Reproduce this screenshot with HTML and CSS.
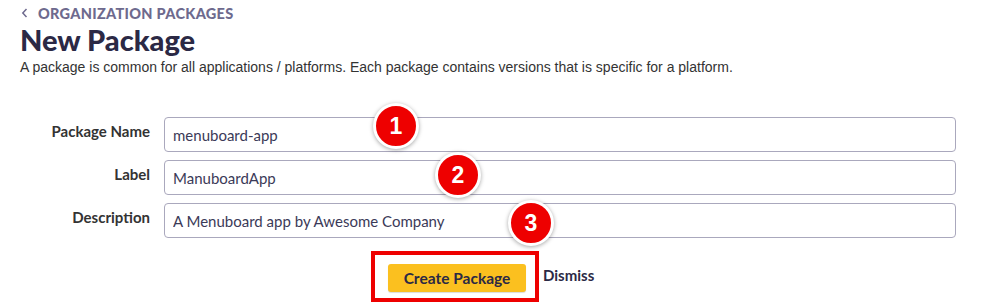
FILE: index.html
```html
<!DOCTYPE html>
<html lang="en">
<head>
<meta charset="utf-8">
<title>New Package</title>
<link rel="stylesheet" href="styles.css">
</head>
<body>

<div id="page">
	<a class="back-link" href="#">
		<svg class="chevron" width="8" height="10" viewBox="0 0 8 10"><path d="M5.5 1 L1.8 5 L5.5 9" fill="none" stroke="#6e6a8e" stroke-width="1.5"/></svg>
		ORGANIZATION PACKAGES
	</a>
	<h1 class="title">New Package</h1>
	<p class="intro">A package is common for all applications / platforms. Each package contains versions that is specific for a platform.</p>

	<form class="package-form">
		<div class="form-row">
			<label class="field-label">Package Name</label>
			<div class="field">
				<input type="text" value="menuboard-app">
				<span class="badge badge-1">1</span>
			</div>
		</div>
		<div class="form-row">
			<label class="field-label">Label</label>
			<div class="field">
				<input type="text" value="ManuboardApp">
				<span class="badge badge-2">2</span>
			</div>
		</div>
		<div class="form-row">
			<label class="field-label">Description</label>
			<div class="field">
				<input type="text" value="A Menuboard app by Awesome Company">
				<span class="badge badge-3">3</span>
			</div>
		</div>
		<div class="actions">
			<div class="highlight">
				<button type="button" class="btn-create">Create Package</button>
			</div>
			<a class="dismiss" href="#">Dismiss</a>
		</div>
	</form>
</div>

</body>
</html>
```

FILE: styles.css
```css
html {
	font-family: Lato, 'Noto Sans', sans-serif;
}

body {
	margin: 0;
	background: #fff;
}

#page {
	padding: 5px 25px 0 20px;
}

.back-link {
	display: flex;
	align-items: center;
	gap: 9px;
	color: #6e6a8e;
	font-size: 14.5px;
	font-weight: 900;
	letter-spacing: 0.3px;
	text-decoration: none;
	height: 16px;
}

.chevron {
	margin-left: 1px;
}

.title {
	color: #2b2945;
	font-size: 29px;
	font-weight: 900;
	margin: 3px 0 0;
	line-height: 32px;
}

.intro {
	font-family: 'Liberation Sans', Arial, sans-serif;
	font-size: 14px;
	color: #333;
	margin: 3px 0 0;
	line-height: 16px;
}

.package-form {
	margin-top: 42px;
}

.form-row {
	display: flex;
	align-items: flex-start;
	margin-bottom: 8px;
}

.field-label {
	width: 130px;
	text-align: right;
	padding: 5px 14px 0 0;
	color: #333;
	font-size: 15px;
	font-weight: 700;
}

.field {
	flex: 1;
	position: relative;
}

.field input {
	box-sizing: border-box;
	width: 100%;
	height: 35px;
	border: 1px solid #aaa8bd;
	border-radius: 4px;
	padding: 0 8px;
	font-family: Lato, 'Noto Sans', sans-serif;
	font-size: 15px;
	color: #3b3a58;
	outline: none;
}

.badge {
	position: absolute;
	box-sizing: border-box;
	width: 46px;
	height: 46px;
	border-radius: 50%;
	background: #ee0000;
	border: 3px solid #fff;
	box-shadow: 0 1px 4px rgba(0, 0, 0, 0.35);
	color: #fff;
	font-family: 'Liberation Sans', Arial, sans-serif;
	font-weight: 700;
	font-size: 23px;
	display: flex;
	align-items: center;
	justify-content: center;
}

.badge-1 {
	left: 209px;
	top: -14px;
}

.badge-2 {
	left: 271px;
	top: -8px;
}

.badge-3 {
	left: 344px;
	top: -3px;
}

.actions {
	display: flex;
	align-items: center;
	gap: 4px;
	margin: 13px 0 0 351px;
}

.highlight {
	border: 4px solid #ee0000;
	padding: 9px 9px 6px 13px;
}

.btn-create {
	background: #fbc01f;
	border: 0;
	border-radius: 3px;
	box-shadow: 0 1px 1px rgba(0, 0, 0, 0.15);
	width: 138px;
	height: 28px;
	color: #2b2945;
	font-family: Lato, 'Noto Sans', sans-serif;
	font-size: 15.5px;
	font-weight: 700;
}

.dismiss {
	color: #2b2945;
	font-size: 15px;
	font-weight: 700;
	text-decoration: none;
	margin-top: -3px;
}
```
